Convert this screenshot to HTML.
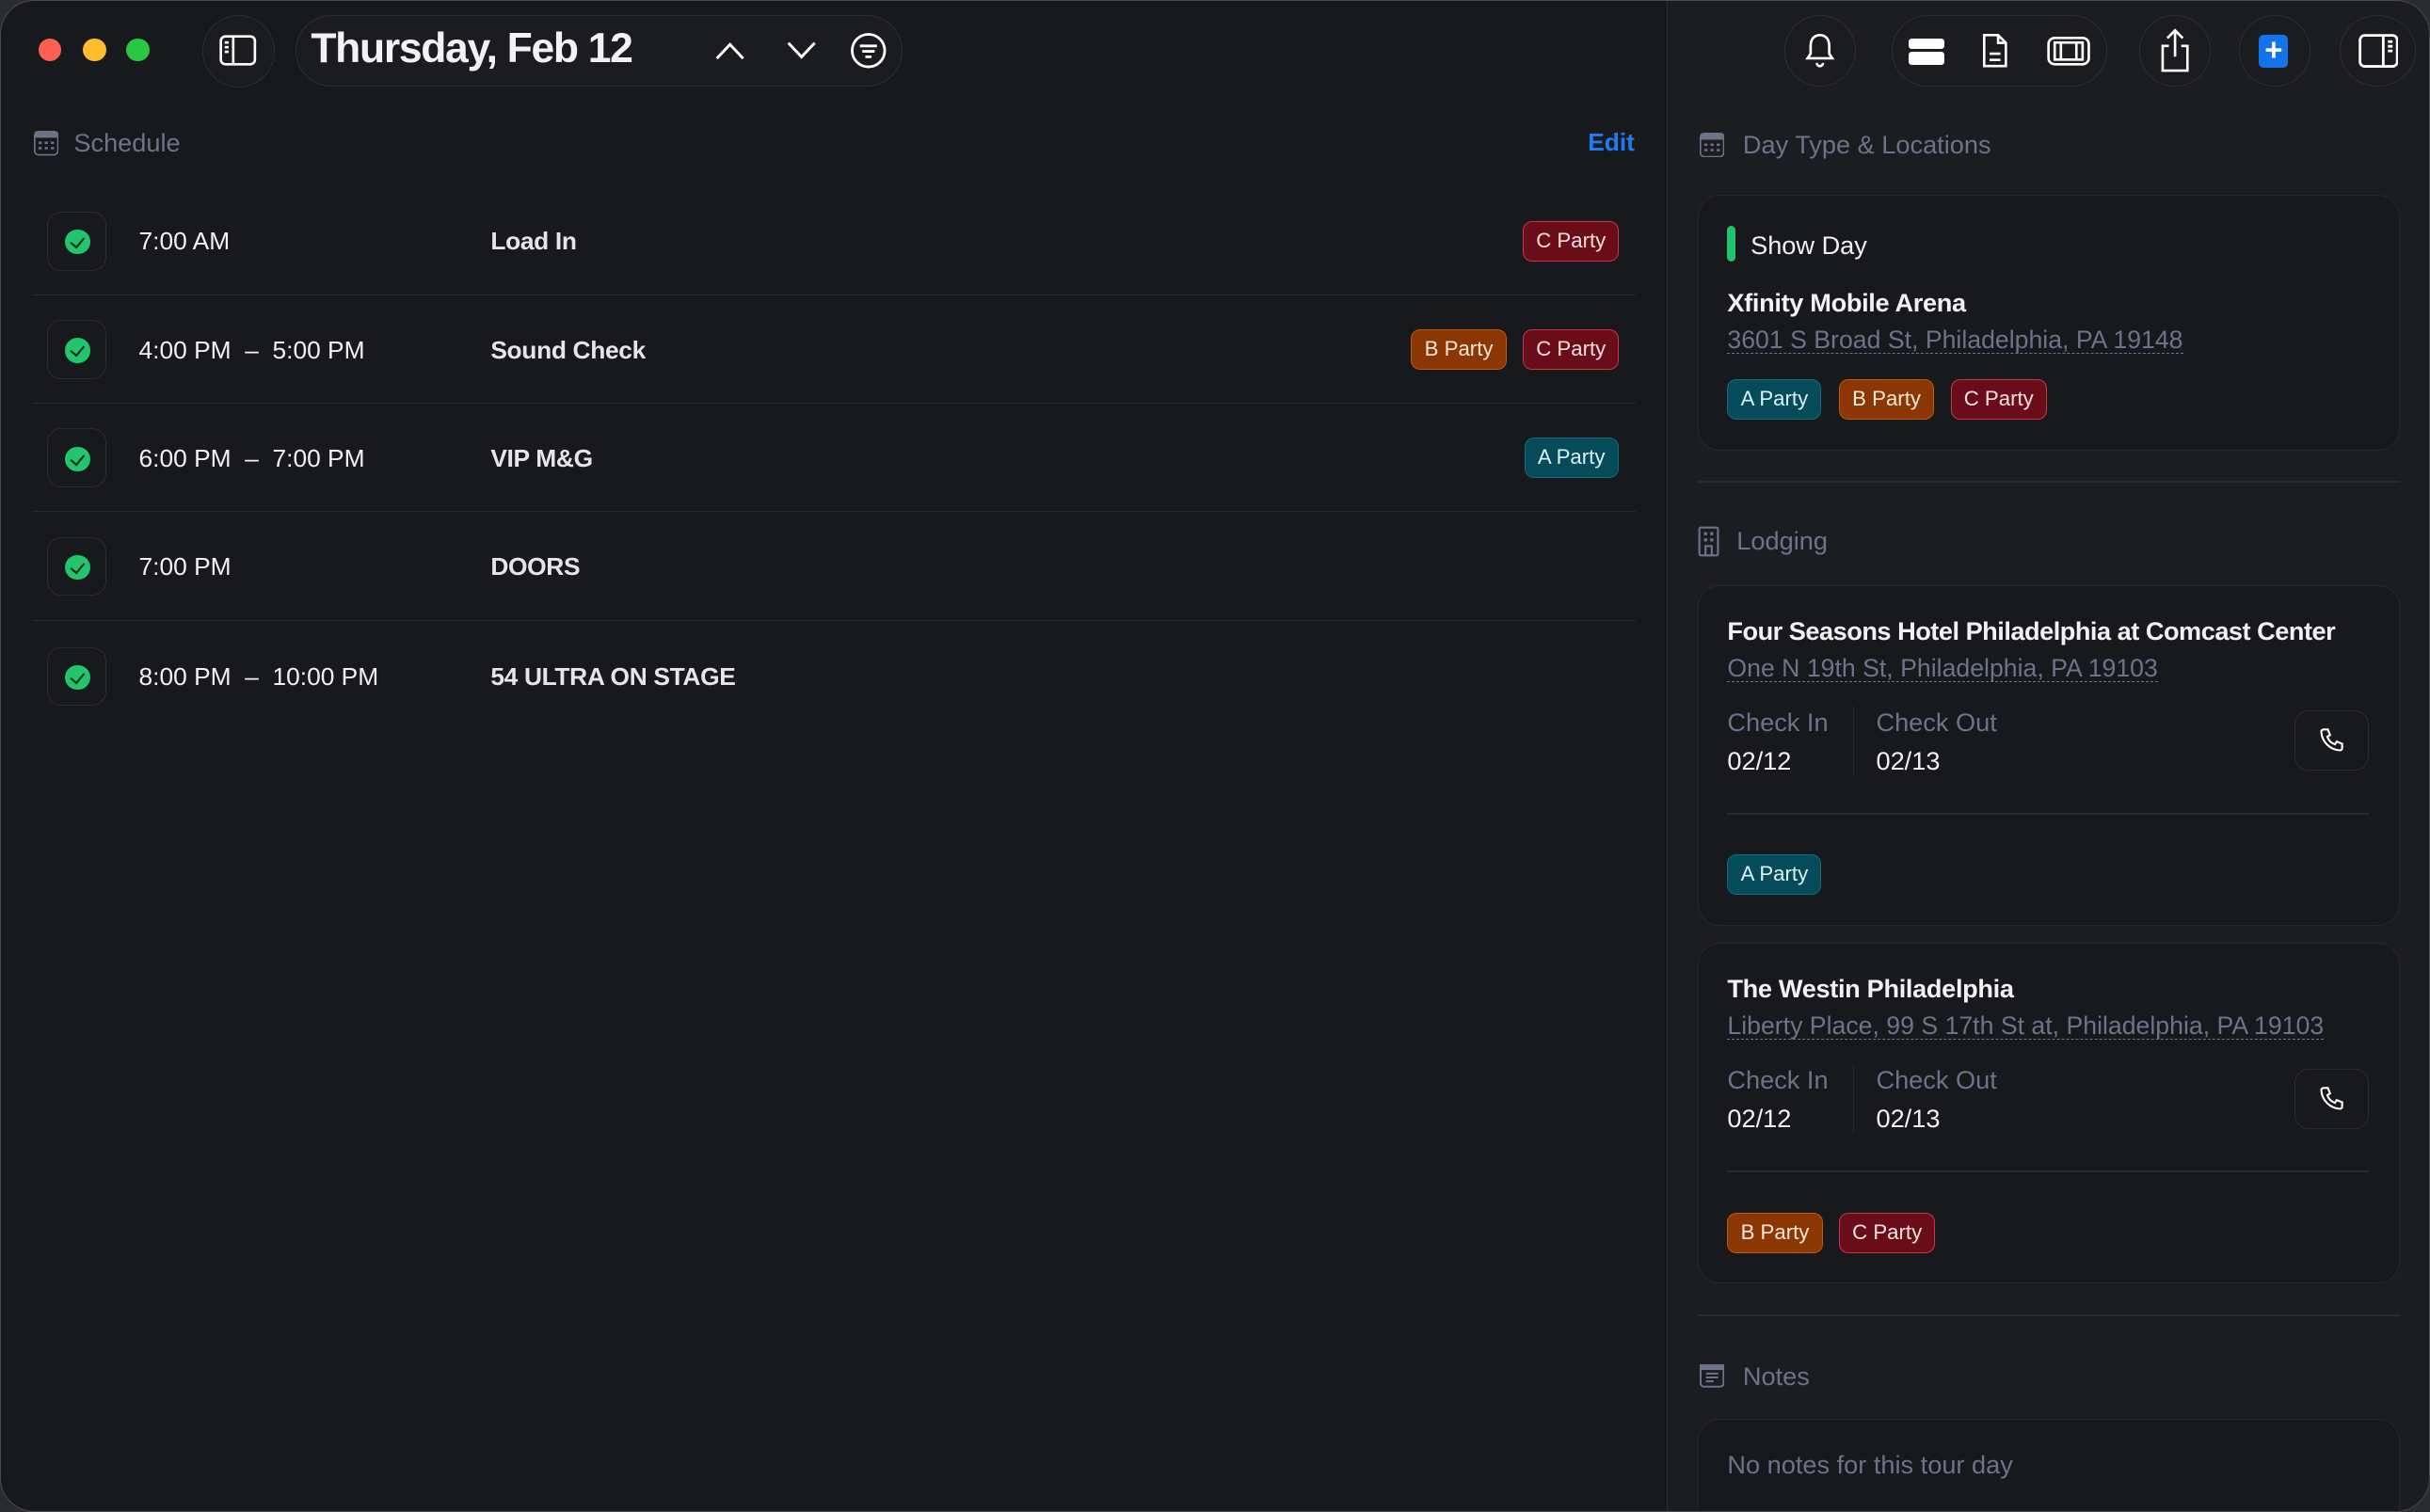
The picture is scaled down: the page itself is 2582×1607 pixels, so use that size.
<!DOCTYPE html>
<html><head><meta charset="utf-8"><style>
*{margin:0;padding:0;box-sizing:border-box}
html,body{width:2582px;height:1607px;overflow:hidden;background:#2b2c30}
#w{zoom:1.64668;width:1568px;height:976px;position:relative;font-family:"Liberation Sans",sans-serif;color:#f2f2f4}
.win{position:absolute;left:0;top:0;width:1568px;height:976px;border-radius:22px;background:#18191c;border:1px solid #4a4b50;overflow:hidden}
.right{position:absolute;left:1075px;top:0;width:493px;height:976px;background:#1c1d20;border-left:1px solid #2c2d31}
.a{position:absolute}
.circ{position:absolute;border:1px solid #2e2f33;border-radius:50%;background:#1b1c1f}
.pill{position:absolute;border:1px solid #2e2f33;border-radius:24px;background:#1b1c1f}
.tag{position:absolute;height:26px;border-radius:6px;font-size:13.5px;line-height:24px;padding:0 8px;border:1px solid}
.ta{background:#064b5a;border-color:#0f6d7c;color:#d9f3f8}
.tb{background:#8a3703;border-color:#c1560f;color:#fde7d6}
.tc{background:#6a0d18;border-color:#c23a48;color:#fbdfe2}
.row{position:absolute;left:20px;width:1035px;height:70px;border-bottom:1px solid #2a2b2f}
.chk{position:absolute;left:10px;top:16px;width:38px;height:38px;border:1px solid #2c2d31;border-radius:9px}
.chk i{position:absolute;left:11px;top:11px;width:16px;height:16px;border-radius:50%;background:#22c46e}
.chk i::after{content:"";position:absolute;left:5px;top:3px;width:4px;height:7px;border:solid #0b2a18;border-width:0 1.6px 1.6px 0;transform:rotate(40deg)}
.time{position:absolute;left:69px;top:26px;font-size:16px}
.ttl{position:absolute;left:296px;top:26px;font-size:16px;font-weight:bold;color:#e6e6e8;letter-spacing:-0.2px}
.sh{position:absolute;font-size:16.5px;color:#6c7489}
.card{position:absolute;left:1095px;width:453px;border:1px solid #27282c;border-radius:14px;background:#18191c}
.addr{position:absolute;font-size:16.2px;color:#6c7489;border-bottom:1px dashed #6c7489;line-height:17px}
.lab{position:absolute;font-size:16.5px;color:#6c7489}
.val{position:absolute;font-size:16.5px;color:#f2f2f4}
.ph{position:absolute;width:48px;height:39px;border:1px solid #2c2d31;border-radius:9px}
.hr{position:absolute;height:1px;background:#2a2b2f}
</style></head><body><div id="w"><div class="win">
<div class="right"></div>
<div class="a" style="left:24px;top:24px;width:15px;height:15px;border-radius:50%;background:#fe5f57"></div>
<div class="a" style="left:53px;top:24px;width:15px;height:15px;border-radius:50%;background:#febc2e"></div>
<div class="a" style="left:81px;top:24px;width:15px;height:15px;border-radius:50%;background:#28c840"></div>
<div class="circ" style="left:130px;top:9px;width:47px;height:47px"></div>
<svg class="a" style="left:141px;top:22px" width="24" height="20" viewBox="0 0 24 20" fill="none" stroke="#fff" stroke-width="1.6"><rect x="1" y="1" width="22" height="18" rx="3"/><line x1="9" y1="1" x2="9" y2="19"/><line x1="3.5" y1="5" x2="6" y2="5"/><line x1="3.5" y1="8" x2="6" y2="8"/><line x1="3.5" y1="11" x2="6" y2="11"/></svg>
<div class="pill" style="left:190px;top:9px;width:392px;height:46px"></div>
<div class="a" style="left:200px;top:16px;font-size:27px;font-weight:bold;letter-spacing:-0.8px">Thursday, Feb 12</div>
<svg class="a" style="left:461px;top:26px" width="19" height="12" viewBox="0 0 19 12" fill="none" stroke="#fff" stroke-width="1.8"><path d="M1 11L9.5 2L18 11"/></svg>
<svg class="a" style="left:507px;top:26px" width="19" height="12" viewBox="0 0 19 12" fill="none" stroke="#fff" stroke-width="1.8"><path d="M1 1L9.5 10L18 1"/></svg>
<svg class="a" style="left:548px;top:20px" width="24" height="24" viewBox="0 0 24 24" fill="none" stroke="#fff" stroke-width="1.7"><circle cx="12" cy="12" r="10.5"/><line x1="6.5" y1="9" x2="17.5" y2="9"/><line x1="8" y1="12.5" x2="16" y2="12.5"/><line x1="10" y1="16" x2="14" y2="16"/></svg>
<div class="circ" style="left:1151px;top:9px;width:46px;height:46px"></div>
<svg class="a" style="left:1162px;top:20px" width="24" height="24" viewBox="0 0 24 24" fill="none" stroke="#fff" stroke-width="1.6"><path d="M12 2c-4 0-6 3-6 7v5l-2 3h16l-2-3V9c0-4-2-7-6-7z"/><path d="M10 20a2 2 0 0 0 4 0"/></svg>
<div class="pill" style="left:1220px;top:9px;width:139px;height:46px"></div>
<div class="a" style="left:1231px;top:24px;width:23px;height:7px;background:#fff;border-radius:2px"></div>
<div class="a" style="left:1231px;top:33px;width:23px;height:8px;background:#fff;border-radius:2px"></div>
<svg class="a" style="left:1278px;top:20px" width="18" height="24" viewBox="0 0 18 24" fill="none" stroke="#fff" stroke-width="1.6"><path d="M2 2h9l5 5v15H2z"/><path d="M11 2v5h5"/><line x1="5.5" y1="14" x2="12.5" y2="14"/><line x1="5.5" y1="18" x2="12.5" y2="18"/></svg>
<svg class="a" style="left:1320px;top:22px" width="28" height="22" viewBox="0 0 28 22" fill="none" stroke="#fff" stroke-width="1.6"><rect x="1" y="2" width="26" height="17" rx="4"/><rect x="5" y="5" width="18" height="11"/><line x1="9" y1="5" x2="9" y2="16"/><line x1="19" y1="5" x2="19" y2="16"/></svg>
<div class="circ" style="left:1380px;top:9px;width:46px;height:46px"></div>
<svg class="a" style="left:1392px;top:17px" width="22" height="30" viewBox="0 0 22 30" fill="none" stroke="#fff" stroke-width="1.6"><path d="M7 12H3v16h16V12h-4"/><path d="M11 2v17M6 7l5-5 5 5"/></svg>
<div class="circ" style="left:1444px;top:9px;width:46px;height:46px"></div>
<div class="a" style="left:1457px;top:22px;width:19px;height:21px;background:#1273ea;border-radius:3px;color:#fff;font-size:20px;line-height:20px;text-align:center;font-weight:bold">+</div>
<div class="circ" style="left:1509px;top:9px;width:49px;height:46px"></div>
<svg class="a" style="left:1521px;top:21px" width="26" height="22" viewBox="0 0 26 22" fill="none" stroke="#fff" stroke-width="1.7"><rect x="1" y="1" width="24" height="20" rx="3"/><line x1="16" y1="1" x2="16" y2="21"/><line x1="19" y1="5" x2="22" y2="5"/><line x1="19" y1="8" x2="22" y2="8"/><line x1="19" y1="11" x2="22" y2="11"/></svg>
<svg class="a" style="left:21px;top:84px" width="16" height="16" viewBox="0 0 16 16"><rect x="0.5" y="0.5" width="15" height="15" rx="2.5" fill="none" stroke="#6c7489"/><rect x="0.5" y="0.5" width="15" height="4" fill="#6c7489"/><g fill="#6c7489"><rect x="3" y="7" width="2" height="1.5"/><rect x="7" y="7" width="2" height="1.5"/><rect x="11" y="7" width="2" height="1.5"/><rect x="3" y="10.5" width="2" height="1.5"/><rect x="7" y="10.5" width="2" height="1.5"/><rect x="11" y="10.5" width="2" height="1.5"/></g></svg>
<div class="sh" style="left:47px;top:82px">Schedule</div>
<div class="a" style="left:1024px;top:82px;font-size:16px;font-weight:bold;color:#1b7cf4">Edit</div>

<div class="row" style="top:120px"><div class="chk"><i></i></div><div class="time">7:00 AM</div><div class="ttl">Load In</div><div class="tag tc" style="left:962px;top:22px">C Party</div></div>
<div class="row" style="top:190px"><div class="chk"><i></i></div><div class="time">4:00 PM &nbsp;–&nbsp; 5:00 PM</div><div class="ttl">Sound Check</div><div class="tag tb" style="left:890px;top:22px">B Party</div><div class="tag tc" style="left:962px;top:22px">C Party</div></div>
<div class="row" style="top:260px"><div class="chk"><i></i></div><div class="time">6:00 PM &nbsp;–&nbsp; 7:00 PM</div><div class="ttl">VIP M&amp;G</div><div class="tag ta" style="left:963px;top:22px">A Party</div></div>
<div class="row" style="top:330px"><div class="chk"><i></i></div><div class="time">7:00 PM</div><div class="ttl">DOORS</div></div>
<div class="row" style="top:401px;border:none"><div class="chk"><i></i></div><div class="time">8:00 PM &nbsp;–&nbsp; 10:00 PM</div><div class="ttl">54 ULTRA ON STAGE</div></div>

<svg class="a" style="left:1096px;top:85px" width="16" height="16" viewBox="0 0 16 16"><rect x="0.5" y="0.5" width="15" height="15" rx="2.5" fill="none" stroke="#6c7489"/><rect x="0.5" y="0.5" width="15" height="4" fill="#6c7489"/><g fill="#6c7489"><rect x="3" y="7" width="2" height="1.5"/><rect x="7" y="7" width="2" height="1.5"/><rect x="11" y="7" width="2" height="1.5"/><rect x="3" y="10.5" width="2" height="1.5"/><rect x="7" y="10.5" width="2" height="1.5"/><rect x="11" y="10.5" width="2" height="1.5"/></g></svg>
<div class="sh" style="left:1124px;top:83px">Day Type &amp; Locations</div>
<div class="card" style="top:125px;height:165px"></div>
<div class="a" style="left:1114px;top:145px;width:5px;height:23px;border-radius:3px;background:#1fc46f"></div>
<div class="a" style="left:1129px;top:148px;font-size:16.5px">Show Day</div>
<div class="a" style="left:1114px;top:185px;font-size:16.5px;font-weight:bold;letter-spacing:-0.2px">Xfinity Mobile Arena</div>
<div class="addr" style="left:1114px;top:210px">3601 S Broad St, Philadelphia, PA 19148</div>
<div class="tag ta" style="left:1114px;top:244px">A Party</div>
<div class="tag tb" style="left:1186px;top:244px">B Party</div>
<div class="tag tc" style="left:1258px;top:244px">C Party</div>
<div class="hr" style="left:1095px;top:310px;width:453px"></div>

<svg class="a" style="left:1095px;top:339px" width="14" height="20" viewBox="0 0 14 20" fill="none" stroke="#6c7489" stroke-width="1.3"><rect x="1" y="1" width="12" height="18" rx="1"/><g fill="#6c7489" stroke="none"><rect x="4" y="4" width="2" height="2"/><rect x="8" y="4" width="2" height="2"/><rect x="4" y="8" width="2" height="2"/><rect x="8" y="8" width="2" height="2"/></g><rect x="5" y="13" width="4" height="6"/></svg>
<div class="sh" style="left:1120px;top:339px">Lodging</div>

<div class="card" style="top:377px;height:220px"></div>
<div class="a" style="left:1114px;top:397px;font-size:16.5px;font-weight:bold;letter-spacing:-0.3px">Four Seasons Hotel Philadelphia at Comcast Center</div>
<div class="addr" style="left:1114px;top:422px">One N 19th St, Philadelphia, PA 19103</div>
<div class="lab" style="left:1114px;top:456px">Check In</div><div class="val" style="left:1114px;top:481px">02/12</div>
<div class="a" style="left:1195px;top:455px;width:1px;height:45px;background:#2a2b2f"></div>
<div class="lab" style="left:1210px;top:456px">Check Out</div><div class="val" style="left:1210px;top:481px">02/13</div>
<div class="ph" style="left:1480px;top:458px"></div>
<svg class="a" style="left:1495px;top:469px" width="17" height="17" viewBox="0 0 24 24" fill="none" stroke="#fff" stroke-width="1.8"><path d="M5 2h4l2 5-2.5 1.5a11 11 0 0 0 7 7L17 13l5 2v4a2 2 0 0 1-2 2A18 18 0 0 1 3 4a2 2 0 0 1 2-2"/></svg>
<div class="hr" style="left:1114px;top:524px;width:414px"></div>
<div class="tag ta" style="left:1114px;top:551px">A Party</div>

<div class="card" style="top:608px;height:220px"></div>
<div class="a" style="left:1114px;top:628px;font-size:16.5px;font-weight:bold;letter-spacing:-0.2px">The Westin Philadelphia</div>
<div class="addr" style="left:1114px;top:653px">Liberty Place, 99 S 17th St at, Philadelphia, PA 19103</div>
<div class="lab" style="left:1114px;top:687px">Check In</div><div class="val" style="left:1114px;top:712px">02/12</div>
<div class="a" style="left:1195px;top:686px;width:1px;height:45px;background:#2a2b2f"></div>
<div class="lab" style="left:1210px;top:687px">Check Out</div><div class="val" style="left:1210px;top:712px">02/13</div>
<div class="ph" style="left:1480px;top:689px"></div>
<svg class="a" style="left:1495px;top:700px" width="17" height="17" viewBox="0 0 24 24" fill="none" stroke="#fff" stroke-width="1.8"><path d="M5 2h4l2 5-2.5 1.5a11 11 0 0 0 7 7L17 13l5 2v4a2 2 0 0 1-2 2A18 18 0 0 1 3 4a2 2 0 0 1 2-2"/></svg>
<div class="hr" style="left:1114px;top:755px;width:414px"></div>
<div class="tag tb" style="left:1114px;top:782px">B Party</div>
<div class="tag tc" style="left:1186px;top:782px">C Party</div>
<div class="hr" style="left:1095px;top:848px;width:453px"></div>

<svg class="a" style="left:1096px;top:880px" width="16" height="15" viewBox="0 0 16 15" fill="none" stroke="#6c7489" stroke-width="1.2"><rect x="0.6" y="0.6" width="14.8" height="13.8" rx="2"/><rect x="0.6" y="0.6" width="14.8" height="2.5" fill="#6c7489"/><line x1="4" y1="6" x2="12" y2="6"/><line x1="4" y1="8.5" x2="12" y2="8.5"/><line x1="4" y1="11" x2="9" y2="11"/></svg>
<div class="sh" style="left:1124px;top:878px">Notes</div>
<div class="card" style="top:915px;height:80px"></div>
<div class="a" style="left:1114px;top:935px;font-size:16.5px;color:#6c7489">No notes for this tour day</div>
</div></div></body></html>
